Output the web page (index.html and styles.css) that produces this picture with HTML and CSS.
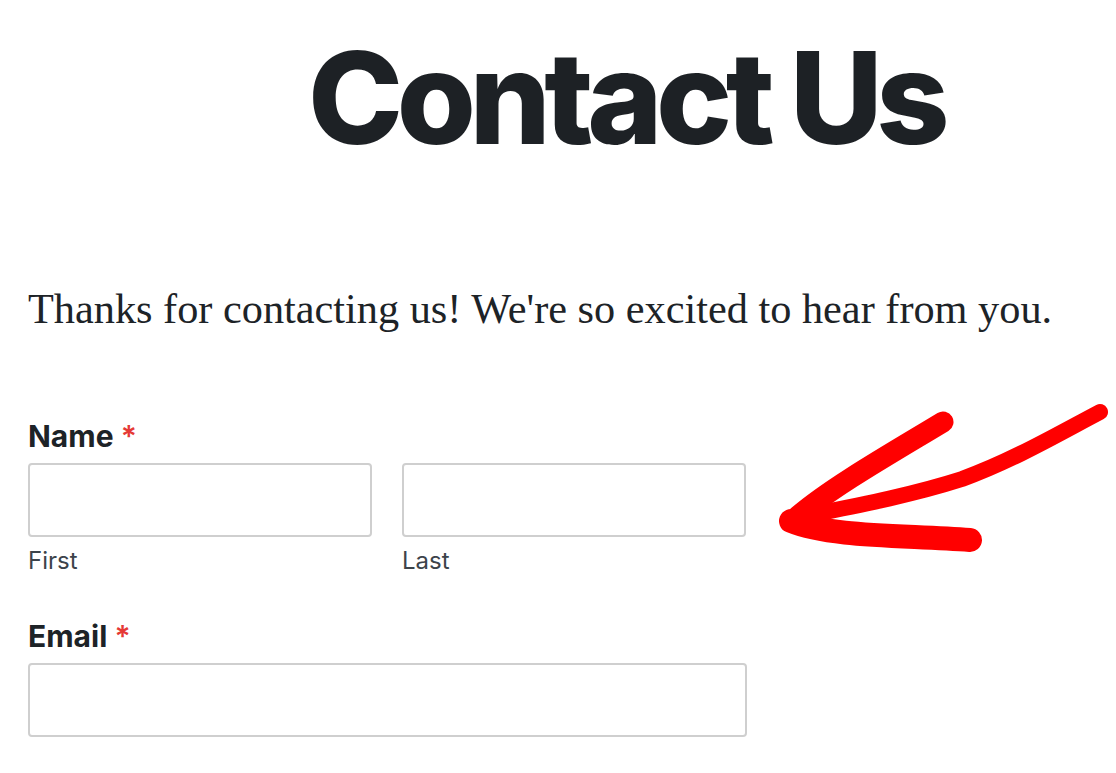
FILE: index.html
```html
<!DOCTYPE html>
<html lang="en">
<head>
<meta charset="utf-8">
<title>Contact Us</title>
<link rel="stylesheet" href="styles.css">
</head>
<body>
<main class="page">
  <h1 class="title">Contact Us</h1>
  <p class="intro">Thanks for contacting us! We're so excited to hear from you.</p>
  <form class="form">
    <div class="field">
      <div class="label">Name <span class="req">*</span></div>
      <div class="row">
        <div class="sub">
          <input class="input" type="text">
          <div class="sublabel">First</div>
        </div>
        <div class="sub">
          <input class="input" type="text">
          <div class="sublabel">Last</div>
        </div>
      </div>
    </div>
    <div class="field">
      <div class="label">Email <span class="req">*</span></div>
      <input class="input wide" type="email">
    </div>
  </form>
  <svg class="arrow" width="360" height="180" viewBox="770 390 360 180" aria-hidden="true">
    <path d="M943 422 C 890 454, 832 487, 798 516" fill="none" stroke="#ff0000" stroke-width="21" stroke-linecap="round"/>
    <path d="M1100 412 C 1060 433, 1012 461, 962 479 C 912 495, 860 505, 800 517" fill="none" stroke="#ff0000" stroke-width="16" stroke-linecap="round"/>
    <path d="M791 521 C 830 537, 900 535, 970 540" fill="none" stroke="#ff0000" stroke-width="24" stroke-linecap="round"/>
  </svg>
</main>
</body>
</html>
```

FILE: styles.css
```css
html, body {
  margin: 0;
  padding: 0;
  background: #ffffff;
}
.page {
  position: relative;
  width: 1116px;
  height: 773px;
  overflow: hidden;
  padding: 0 0 0 28px;
  box-sizing: border-box;
}
.title {
  margin: 0;
  padding: 34px 0 0 280px;
  font-family: Inter, "Liberation Sans", sans-serif;
  font-weight: 800;
  font-size: 128px;
  line-height: 1;
  letter-spacing: -6.5px;
  color: #1d2125;
}
.intro {
  margin: 122px 0 0 0;
  font-family: "Liberation Serif", "DejaVu Serif", serif;
  font-size: 42.3px;
  line-height: 50px;
  color: #1d2327;
  white-space: nowrap;
}
.form {
  margin-top: 85px;
  width: 718px;
}
.field {
  margin-bottom: 44px;
}
.label {
  font-family: Inter, "Liberation Sans", sans-serif;
  font-weight: 700;
  font-size: 30px;
  line-height: 34px;
  color: #1d2327;
  margin-bottom: 10px;
}
.req {
  color: #e53935;
  font-weight: 600;
}
.row {
  display: flex;
  gap: 30px;
}
.sub {
  flex: 0 0 344px;
}
.input {
  display: block;
  box-sizing: border-box;
  width: 100%;
  height: 74px;
  margin: 0;
  border: 2px solid #cfcfcf;
  border-radius: 4px;
  background: #fff;
}
.input.wide {
  width: 719px;
}
.sublabel {
  margin-top: 10px;
  font-family: Inter, "Liberation Sans", sans-serif;
  font-size: 24px;
  line-height: 28px;
  color: #3c434a;
}
.arrow {
  position: absolute;
  left: 770px;
  top: 390px;
}
```
